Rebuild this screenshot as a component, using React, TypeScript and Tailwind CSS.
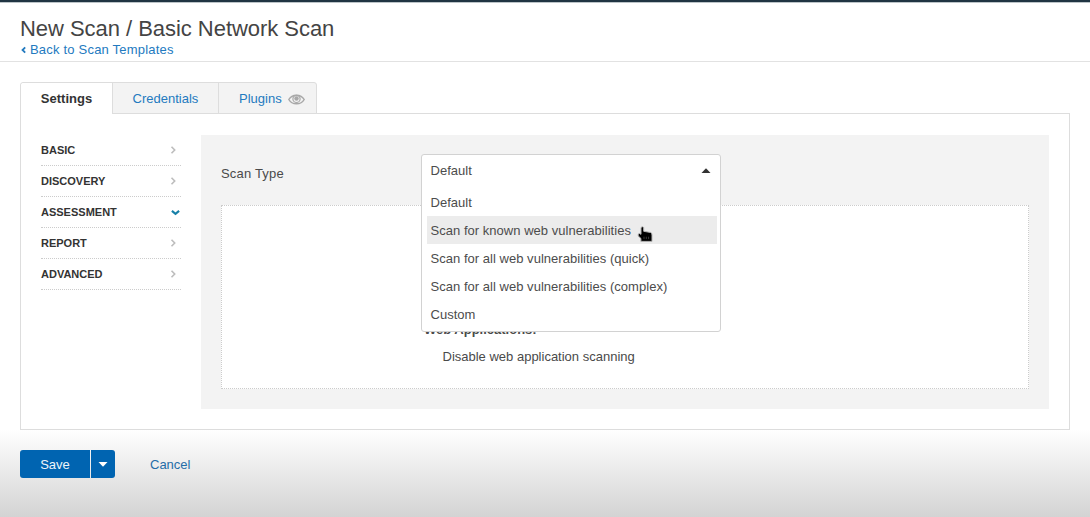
import type { ReactNode } from "react";

const sections = ["BASIC", "DISCOVERY", "ASSESSMENT", "REPORT", "ADVANCED"];
const scanTypes = [
  "Default",
  "Scan for known web vulnerabilities",
  "Scan for all web vulnerabilities (quick)",
  "Scan for all web vulnerabilities (complex)",
  "Custom",
];

function Chevron({ className, d, width = 1.4 }: { className: string; d: string; width?: number }) {
  return (
    <svg viewBox="0 0 8 8" className={className} fill="none" stroke="currentColor" strokeWidth={width}>
      <path d={d} />
    </svg>
  );
}

function EyeIcon() {
  return (
    <svg viewBox="0 0 17 12" className="ml-[6px] h-3 w-[17px] text-[#a8a8a8]" fill="none" stroke="currentColor">
      <path d="M.8 6.500C2.400 3.700 5.100 2.200 8.500 2.200S14.600 3.700 16.200 6.500C14.600 9.300 11.900 10.800 8.500 10.800S2.400 9.300 .8 6.500Z" strokeWidth="1.500" />
      <circle cx="8.500" cy="5.900" r="3.600" strokeWidth="1.200" />
      <circle cx="8.500" cy="5.500" r="2.200" fill="currentColor" stroke="none" />
    </svg>
  );
}

function HandCursor() {
  return (
    <svg viewBox="0 0 16 18" className="absolute top-[9px] left-[210px] h-[18px] w-4">
      <path
        d="M4 2.500Q5.200 1 6.700 2.500V6.300L13.800 7.500Q15 8 15 10V16.400H3.900V13.400L1.200 10.900Q.7 8.800 2.200 8.400L4 9.300Z"
        className="fill-black stroke-[#b5b5b5]"
        strokeWidth="1"
      />
      <path d="M7 11.700v2.400M9.300 11.700v2.400M11.600 11.700v2.400" className="stroke-[#666666]" strokeWidth=".6" />
    </svg>
  );
}

function Tab({ children, className }: { children: ReactNode; className: string }) {
  return <div className={`flex h-full items-center border-r border-[#dddddd] pt-px text-[13px] ${className}`}>{children}</div>;
}

function ScanTypeSelect() {
  return (
    <div className="absolute top-[19px] left-[220px] h-[178px] w-[300px] rounded-[3px] border border-[#d2d2d2] bg-white text-[13px] tracking-[0.03px] text-[#4c4c4c]">
      <div className="flex h-[31px] items-center justify-between pr-[9px] pl-[8.500px]">
        <span>Default</span>
        <svg viewBox="0 0 10 5" className="h-[5px] w-[10px] fill-[#333333]">
          <path d="M.5 5L5 .3L9.500 5Z" />
        </svg>
      </div>
      <div className="mt-[2px] mr-[3px] ml-[5px]">
        {scanTypes.map((label, index) => (
          <div key={label} className={`relative flex h-7 items-center pt-[2px] pl-[3.500px] ${index === 1 ? "bg-[#ececec]" : ""}`}>
            {label}
            {index === 1 && <HandCursor />}
          </div>
        ))}
      </div>
    </div>
  );
}

export default function App() {
  return (
    <div className="h-[517px] w-[1090px] overflow-hidden bg-white bg-[linear-gradient(to_bottom,#ffffff_0px,#ffffff_430px,#ececec_467px,#d3d3d3_517px)] font-['Liberation_Sans',Arial,sans-serif] text-[#4a4a4a]">
      <header className="h-[62px] border-t-2 border-b border-t-[#203442] border-b-[#e2e2e2] pl-5 shadow-[inset_0_1px_0_#bcc4c8]">
        <h1 className="pt-[13px] text-[22px] leading-[28px] tracking-[-0.04px] text-[#444444]">New Scan / Basic Network Scan</h1>
        <a className="flex items-center text-[13px] leading-[14px] tracking-[0.2px] text-[#237abf]">
          <Chevron className="mr-[2px] h-2 w-2" d="M5.200 1.300L2.500 4L5.200 6.700" width={1.8} />
          Back to Scan Templates
        </a>
      </header>

      <main className="px-5 pt-[20px]">
        <div className="relative -mb-px flex h-[32px] w-[297px] rounded-t-[3px] border border-[#dddddd] bg-[#f3f3f3]">
          <div className="-mb-px flex rounded-tl-[3px] bg-white">
            <Tab className="w-[92px] justify-center rounded-tl-[3px] bg-white font-bold text-[#333333]">Settings</Tab>
          </div>
          <Tab className="w-[106px] justify-center text-[#237abf]">Credentials</Tab>
          <div className="flex items-center pt-px pl-5 text-[13px] text-[#237abf]">
            Plugins
            <EyeIcon />
          </div>
        </div>

        <div className="flex h-[317px] w-[1050px] border border-[#dddddd] bg-white pt-[21px] pr-5 pl-5">
          <nav className="w-[160px]">
            {sections.map((name) => (
              <div key={name} className="flex h-[31px] w-[140px] items-center justify-between border-b border-dotted border-[#cccccc] text-[11px] font-bold text-[#333333]">
                {name}
                {name === "ASSESSMENT" ? (
                  <Chevron className="mr-[1px] h-[9px] w-[9px] text-[#1780a8]" d="M.8 2.500L4 5.200L7.200 2.500" width={1.9} />
                ) : (
                  <Chevron className="mr-1 h-2 w-2 text-[#bdbdbd]" d="M2.500 .7L5.700 4L2.500 7.300" width={1.600} />
                )}
              </div>
            ))}
          </nav>

          <section className="relative h-[274px] w-[848px] bg-[#f3f3f3] px-5 pt-[27px] text-[13px]">
            <div className="h-[43px] pt-px leading-[22px] tracking-[0.18px]">Scan Type</div>
            <div className="h-[184px] border border-dotted border-[#cccccc] bg-white pt-[114px] pl-[202px]">
              <div className="leading-[20px] font-bold">Web Applications:</div>
              <div className="mt-[7px] pl-[18.500px] leading-[20px]">Disable web application scanning</div>
            </div>
            <ScanTypeSelect />
          </section>
        </div>

        <footer className="mt-5 flex items-center text-[13px]">
          <button className="h-7 w-[70px] rounded-l-[3px] bg-[#0064b1] pt-px text-[#eef5fa]">Save</button>
          <button className="ml-px flex h-7 w-6 items-center justify-center rounded-r-[3px] bg-[#0064b1]">
            <svg viewBox="0 0 10 5" className="h-[5px] w-[10px] fill-white">
              <path d="M.5 0H9.500L5 4.700Z" />
            </svg>
          </button>
          <a className="ml-[35px] pt-[2px] text-[#256da8]">Cancel</a>
        </footer>
      </main>
    </div>
  );
}
